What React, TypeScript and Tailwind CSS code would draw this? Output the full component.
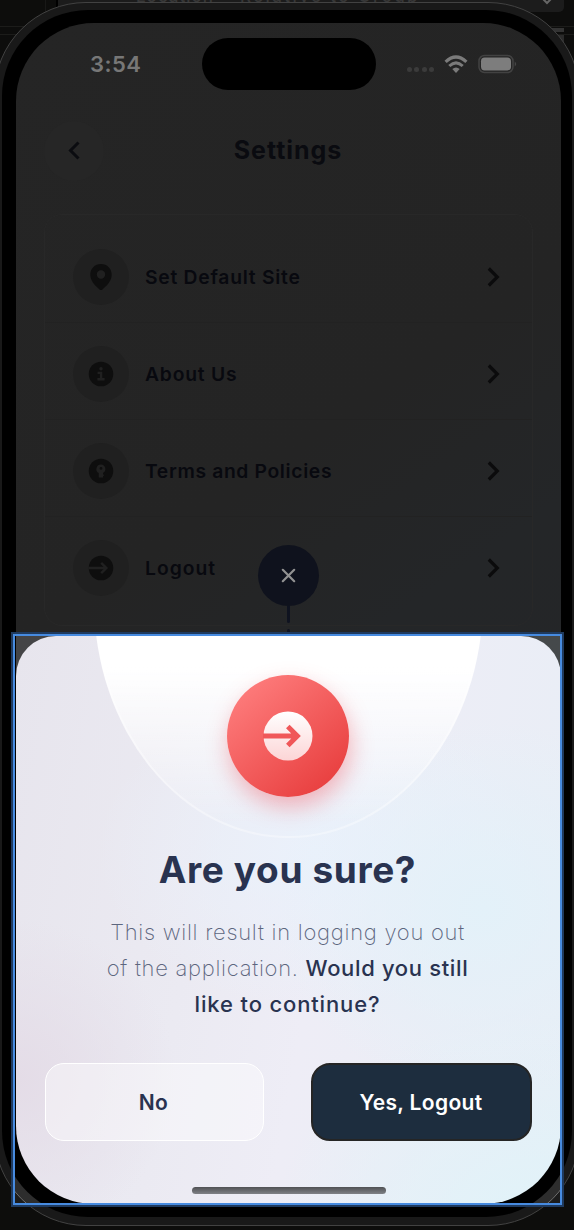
import React from "react";

const ROWS = [
  { label: "Set Default Site", icon: "pin", track: "tracking-[0.750px]" },
  { label: "About Us", icon: "info", track: "tracking-[0.8px]" },
  { label: "Terms and Policies", icon: "key", track: "tracking-[0.65px]" },
  { label: "Logout", icon: "out", track: "tracking-[1px]" },
];

function RowIcon({ kind }: { kind: string }) {
  if (kind === "pin") {
    return (
      <svg width="26" height="28" viewBox="0 0 26 28" fill="#0e0e0e" fillRule="evenodd">
        <path d="M13 1C6.600 1 2.300 5.800 2.300 11.700c0 6.600 5.200 11 9.200 14.700q1.500 1.300 3 0c4-3.700 9.200-8.100 9.200-14.700C23.700 5.800 19.400 1 13 1Zm0 6.300a4.200 4.200 0 1 1 0 8.400a4.200 4.200 0 0 1 0-8.400Z" />
      </svg>
    );
  }
  return (
    <svg width="26" height="26" viewBox="0 0 26 26" fill="none">
      <circle cx="13" cy="13" r="12.300" fill="#0e0e0e" />
      {kind === "info" && (
        <g fill="#202020">
          <circle cx="13" cy="7.800" r="1.700" />
          <path d="M9.600 10.800h4.700v6.300h2.300v2.300H9.400v-2.300h2.500v-4H9.600Z" />
        </g>
      )}
      {kind === "key" && (
        <path fill="#202020" d="M13 6.500a4.600 4.600 0 0 0-2.300 8.600v4.500h4.300v-1.500h.8v-1.600H15v-1.400a4.600 4.600 0 0 0-2-8.600Zm0 2.500a1.400 1.400 0 1 1 0 2.800a1.400 1.400 0 0 1 0-2.800Z" />
      )}
      {kind === "out" && (
        <path stroke="#202020" strokeWidth="2.400" d="M.5 13h17.800M13.200 7.800l5.200 5.200l-5.200 5.200" />
      )}
    </svg>
  );
}

function StatusBar() {
  return (
    <div className="flex h-[90px] items-start justify-between">
      <div className="w-[125px] pl-[74px] pt-[27px] text-[22px] leading-[28px] font-semibold text-[#777777] whitespace-nowrap tracking-[0.5px]">3:54</div>
      <div className="ml-[61px] mt-[15px] h-[52px] w-[174px] shrink-0 rounded-full bg-black" />
      <div className="flex w-[185px] items-center pl-[31px] pt-[31px]">
        <div className="flex gap-[2.400px] pt-[10px]">
          {[0, 1, 2, 3].map((i) => (
            <span key={i} className="size-[5px] rounded-full bg-[#3b3b3b]" />
          ))}
        </div>
        <svg className="ml-[10px]" width="24" height="19" viewBox="0 0 24 19" fill="none" stroke="#7b7b7b">
          <path strokeWidth="3.200" d="M1.600 6.900Q12-2.900 22.400 6.900" />
          <path strokeWidth="3" d="M5.300 11Q12 4.800 18.700 11" />
          <path fill="#7b7b7b" stroke="none" d="M8.300 14Q12 10.800 15.700 14L12 18Z" />
        </svg>
        <svg className="ml-[10px]" width="39" height="20" viewBox="0 0 39 20">
          <rect x="1" y="1.500" width="34" height="17" rx="5.500" fill="none" stroke="#424242" strokeWidth="1.500" />
          <rect x="3" y="3.600" width="30" height="12.800" rx="3.600" fill="#7d7d7d" />
          <path d="M36.700 7.500q3 2.500 0 5Z" fill="#464646" />
        </svg>
      </div>
    </div>
  );
}

function SettingsScreen() {
  return (
    <div className="h-full w-full bg-[linear-gradient(145deg,#252525_0%,#242424_40%,#242628_55%,#252528_100%)]">
      <StatusBar />
      <header className="flex h-[75px] items-center pl-7">
        <div className="flex size-[60px] items-center justify-center rounded-full bg-[#262626]">
          <svg width="14" height="20" viewBox="0 0 14 20" fill="none" stroke="#0b0c10" strokeWidth="3">
            <path d="M11.500 1.500L3.500 9.500l8 8" />
          </svg>
        </div>
        <h1 className="ml-[104px] w-[160px] pb-[2px] text-center text-[25px] leading-8 font-bold tracking-[0.950px] text-[#0a0b10]">Settings</h1>
      </header>
      <div className="mx-[28px] mt-[26px] h-[412px] rounded-[18px] border border-[#282828] pt-[11px]">
        {ROWS.map((r, i) => (
          <div key={r.label} className={i < 3 ? "flex h-[97px] items-center border-b border-[#222222] pl-[28px] pr-[32px] pt-[5px]" : "flex h-[97px] items-center pl-[28px] pr-[32px] pt-[5px]"}>
            <div className="flex size-[56px] items-center justify-center rounded-full bg-[#202020]">
              <RowIcon kind={r.icon} />
            </div>
            <span className={`ml-4 flex-1 text-[19.300px] leading-7 font-semibold text-[#08090f] whitespace-nowrap ${r.track}`}>{r.label}</span>
            <svg width="13" height="20" viewBox="0 0 13 20" fill="none" stroke="#0b0b0c" strokeWidth="3.200">
              <path d="M1.800 1.500l8.500 8.500l-8.500 8.500" />
            </svg>
          </div>
        ))}
      </div>
    </div>
  );
}

function CloseHandle() {
  return (
    <div className="absolute left-[258px] top-[544.500px] flex flex-col items-center">
      <div className="flex size-[61px] items-center justify-center rounded-full bg-[#0f121d]">
        <svg width="15" height="15" viewBox="0 0 15 15" fill="none" stroke="#929292" strokeWidth="2.200" strokeLinecap="round">
          <path d="M1.800 1.800l11.400 11.400M13.200 1.800L1.800 13.200" />
        </svg>
      </div>
      <div className="h-[17px] w-[3px] rounded-b-full bg-[#0f1320]" />
      <div className="mt-[6px] h-[8px] w-[3px] rounded-t-full bg-[#0f1320]" />
    </div>
  );
}

function LogoutSheet() {
  return (
    <section className="relative h-[568px] w-[545px] overflow-hidden rounded-t-[40px] rounded-b-[78px] bg-[#ebebf3] bg-[radial-gradient(ellipse_210px_190px_at_86%_48%,#e3f1f9_0%,#e3f1f900_100%),radial-gradient(ellipse_260px_220px_at_95%_105%,#e0f3f9_0%,#e0f3f900_100%),radial-gradient(ellipse_220px_160px_at_55%_38%,#eaf1fb_0%,#eaf1fb00_100%),radial-gradient(ellipse_160px_160px_at_0%_78%,#e4dce7_0%,#e4dce700_100%),linear-gradient(100deg,#e7e5ed_0%,#ebeaf2_35%,#eeedf6_55%,#e8eef6_100%)]">
      <div className="absolute left-[77.500px] top-[-274px] h-[476px] w-[389px] rounded-[50%] border-2 border-white/35 bg-[linear-gradient(to_bottom,#ffffff_0%,#ffffff_64%,#ffffff00_98%)] bg-origin-border" />
      <div className="relative left-[-1px] flex flex-col items-center">
        <div className="mt-[39px] flex size-[122px] items-center justify-center rounded-full bg-[linear-gradient(140deg,#ff8080_5%,#e83e3e_90%)] shadow-[2px_10px_22px_rgba(240,80,90,0.4)]">
          <svg width="50" height="50" viewBox="0 0 50 50" fill="none">
            <defs>
              <linearGradient id="disc" x1="0" y1="0" x2="0" y2="1">
                <stop stopColor="#fff" />
                <stop offset="1" stopColor="#fcd5d6" />
              </linearGradient>
            </defs>
            <circle cx="25" cy="25" r="24.500" fill="url(#disc)" />
            <path stroke="#f05759" strokeWidth="5" d="M0 25h34M24.800 15.500L34.300 25l-9.500 9.500" />
          </svg>
        </div>
        <h2 className="mt-[48px] text-[37px] leading-[50px] font-bold tracking-[0.620px] text-[#293350] whitespace-nowrap">Are you sure?</h2>
        <p className="mt-[19px] text-center text-[22px] leading-9 font-extralight text-[#5d667e] whitespace-nowrap">
          <span className="tracking-[0.720px]">This will result in logging you out</span>
          <br />
          <span className="tracking-[0.720px]">of the application. </span>
          <span className="font-medium tracking-[0.650px] text-[#293350]">Would you still</span>
          <br />
          <span className="font-medium tracking-[0.850px] text-[#293350]">like to continue?</span>
        </p>
      </div>
      <div className="relative mt-[41px] flex justify-between px-[29px] text-[21px] font-semibold">
        <button className="h-[78px] w-[219px] rounded-[19px] border-[1.500px] border-white bg-white/40 pt-[2px] pr-[2px] tracking-[0.5px] text-[#293350]">No</button>
        <button className="h-[78px] w-[221px] rounded-[19px] border-2 border-[#252525] bg-[#1d2d3e] pt-[2px] pr-[1px] tracking-[0.350px] text-white">Yes, Logout</button>
      </div>
      <div className="relative mx-auto mt-[46px] h-[7px] w-[194px] rounded-full bg-[linear-gradient(#505154,#7f8186)]" />
    </section>
  );
}

function EditorBackdrop() {
  return (
    <div className="h-full w-full bg-[#0d0d0c]">
      <div className="flex h-[27px] border-b border-[#1c1c1a]">
        <div className="w-[46px] border-r border-[#181817]" />
        <div className="w-[12px] border-r-2 border-black" />
        <div className="relative h-[12px] w-[506px] overflow-hidden rounded-br-[5px] bg-[#1c1c1c] text-[17px] leading-5 font-medium tracking-[0.6px] text-[#383838] whitespace-nowrap">
          <div className="mt-[-14px] flex pl-[78px]">
            <span className="w-[104px] tracking-[1px]">Location</span>
            <span className="tracking-[2.400px]">Relative to Group</span>
          </div>
          <svg className="absolute right-[11px] top-[-3px]" width="12" height="8" viewBox="0 0 12 8" fill="none" stroke="#666" strokeWidth="2">
            <path d="M1 1l5 5l5-5" />
          </svg>
        </div>
      </div>
      <div className="flex h-[8px] justify-between border-b border-[#1c1c1a]">
        <div className="w-[50px]" />
        <div className="mr-[10px] mt-px h-[4px] w-[20px] bg-[#333]" />
      </div>
      <div className="ml-auto mr-[10px] h-[7px] w-[20px] bg-[#2b2b2b]" />
    </div>
  );
}

export default function App() {
  return (
    <main className="relative h-[1230px] w-[574px] overflow-hidden font-['Inter',sans-serif]">
      <EditorBackdrop />
      <div className="absolute left-[-6px] top-[2px] h-[1224px] w-[586px] rounded-[92px] border border-[#424242] bg-[#191919] px-[7px] pt-[7px] pb-[8px]">
        <div className="h-full w-full rounded-[86px] bg-black px-[14px] py-[13px]">
          <div className="h-[1181px] w-[545px] overflow-hidden rounded-[78px]">
            <SettingsScreen />
          </div>
        </div>
      </div>
      <CloseHandle />
      <div className="absolute left-[16px] top-[636px] h-[568px] w-[545px]">
        <div className="flex h-full flex-col justify-between">
          <div className="h-[120px] bg-[linear-gradient(to_right,#444446,#45494b)]" />
          <div className="relative mx-[-1px] h-[140px] overflow-hidden bg-[#1c1c1c]">
            <div className="absolute bottom-[-22px] left-[-21px] h-[400px] w-[586px] rounded-[92px] border border-[#6e6e6e] bg-[#2d2d2d] px-[7px] pt-[7px] pb-[8px]">
              <div className="h-full w-full rounded-[86px] bg-black" />
            </div>
          </div>
        </div>
      </div>
      <div className="absolute left-[16px] top-[636px]">
        <LogoutSheet />
      </div>
      <div className="absolute left-[11px] top-[632px] h-[575px] w-[553px] border-2 border-[#1f3a5e]">
        <div className="h-full w-full border-2 border-[#478be0]" />
      </div>
    </main>
  );
}
